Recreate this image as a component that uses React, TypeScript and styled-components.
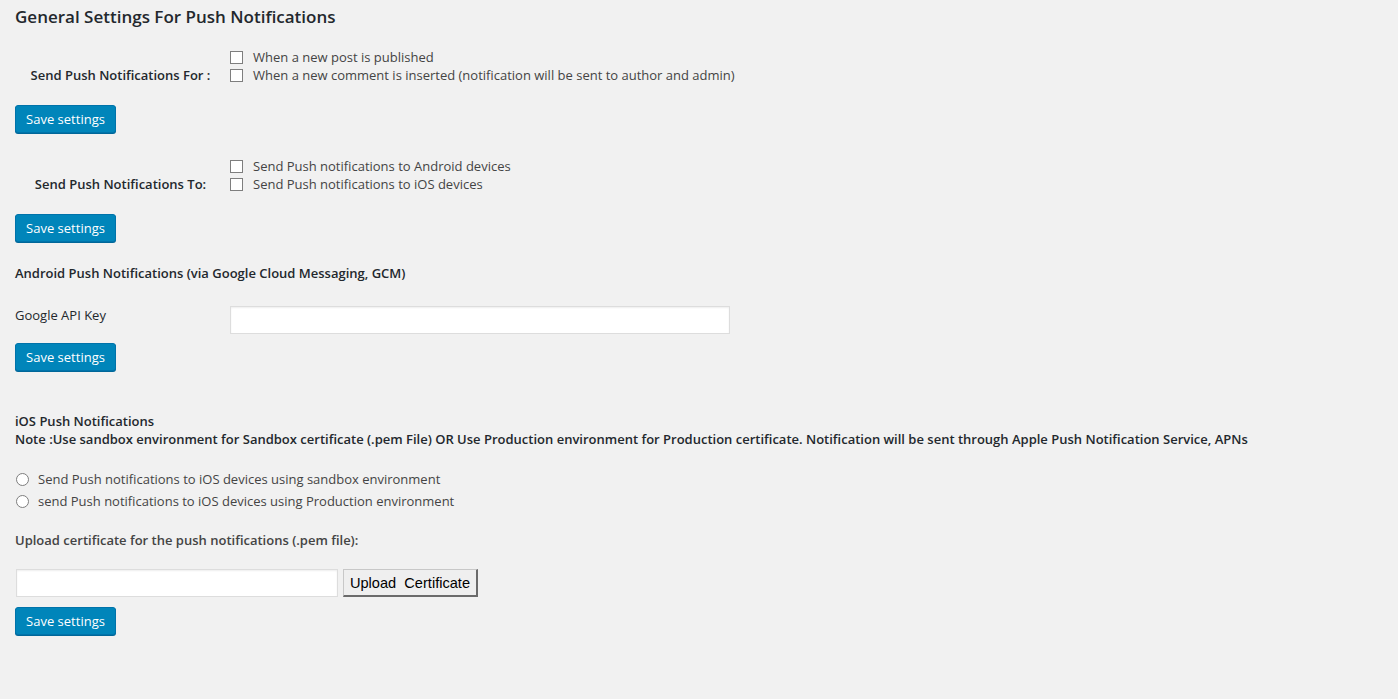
import React from "react";
import styled, { createGlobalStyle } from "styled-components";

const Global = createGlobalStyle`
  html, body { margin: 0; padding: 0; background: #f1f1f1; }
  body { font-family: "Open Sans", "Noto Sans", sans-serif; font-size: 13px; color: #444; }
  * { box-sizing: border-box; }
`;

const Page = styled.div`
  padding: 6px 15px 40px 15px;
  width: 1398px;
  min-height: 699px;
`;

const Title = styled.h2`
  margin: 0;
  font-size: 17px;
  font-weight: 600;
  color: #23282d;
  line-height: 22px;
`;

const FieldRow = styled.div<{ $top: number }>`
  display: grid;
  grid-template-columns: 211px 1fr;
  column-gap: 4px;
  align-items: center;
  margin-top: ${(p) => p.$top}px;
`;

const CenterLabel = styled.div`
  text-align: center;
  font-weight: 600;
  color: #23282d;
  padding-top: 17px;
`;

const Options = styled.div`
  display: flex;
  flex-direction: column;
`;

const Option = styled.label`
  display: flex;
  align-items: center;
  height: 18px;
  line-height: 18px;
  color: #444;
`;

const Check = styled.span`
  width: 13px;
  height: 13px;
  border: 1px solid #7e7e7e;
  background: #fff;
  margin-right: 10px;
  flex: none;
`;

const Radio = styled.span`
  width: 13px;
  height: 13px;
  border: 1px solid #7e7e7e;
  border-radius: 50%;
  background: #fff;
  margin-left: 1px;
  margin-right: 9px;
  flex: none;
`;

const SaveButton = styled.button<{ $top: number }>`
  display: block;
  margin-top: ${(p) => p.$top}px;
  height: 28px;
  width: 101px;
  padding: 0;
  background: #0085ba;
  border: 1px solid #0073aa;
  border-radius: 3px;
  box-shadow: 0 1px 0 #006799;
  color: #fff;
  font-family: "Open Sans", sans-serif;
  font-size: 13px;
  line-height: 26px;
  text-align: center;
`;

const SubHeading = styled.div<{ $top: number }>`
  margin-top: ${(p) => p.$top}px;
  font-weight: 600;
  color: #23282d;
  line-height: 18px;
`;

const KeyRow = styled.div`
  display: grid;
  grid-template-columns: 215px 500px;
  align-items: center;
  margin-top: 24px;
`;

const KeyLabel = styled.div`
  color: #23282d;
  padding-bottom: 10px;
`;

const TextInput = styled.div<{ $w: number }>`
  width: ${(p) => p.$w}px;
  height: 28px;
  background: #fff;
  border: 1px solid #ddd;
  box-shadow: inset 0 1px 2px rgba(0, 0, 0, 0.07);
`;

const NoteBlock = styled.div`
  margin-top: 41px;
  font-weight: 600;
  color: #23282d;
  line-height: 18px;
`;

const RadioGroup = styled.div`
  margin-top: 22px;
  display: flex;
  flex-direction: column;
  gap: 4px;
`;

const UploadLabel = styled.div`
  margin-top: 21px;
  font-weight: 600;
  color: #444;
  line-height: 18px;
`;

const UploadRow = styled.div`
  display: flex;
  align-items: center;
  gap: 5px;
  margin-top: 20px;
  padding-left: 1px;
`;

const UploadButton = styled.button`
  height: 28px;
  width: 135px;
  padding: 0;
  background: #efefef;
  border-style: solid;
  border-color: #c8c8c8 #6b6b6b #6b6b6b #c8c8c8;
  border-width: 1px 2px 2px 1px;
  font-family: "Liberation Sans", Arial, sans-serif;
  font-size: 14.6px;
  color: #000;
  white-space: pre;
`;

export default function App() {
  return (
    <Page>
      <Global />
      <Title>General Settings For Push Notifications</Title>

      <FieldRow $top={20}>
        <CenterLabel>Send Push Notifications For :</CenterLabel>
        <Options>
          <Option><Check />When a new post is published</Option>
          <Option><Check />When a new comment is inserted (notification will be sent to author and admin)</Option>
        </Options>
      </FieldRow>
      <SaveButton $top={21}>Save settings</SaveButton>

      <FieldRow $top={24}>
        <CenterLabel>Send Push Notifications To:</CenterLabel>
        <Options>
          <Option><Check />Send Push notifications to Android devices</Option>
          <Option><Check />Send Push notifications to iOS devices</Option>
        </Options>
      </FieldRow>
      <SaveButton $top={21}>Save settings</SaveButton>

      <SubHeading $top={22}>Android Push Notifications (via Google Cloud Messaging, GCM)</SubHeading>

      <KeyRow>
        <KeyLabel>Google API Key</KeyLabel>
        <TextInput $w={500} />
      </KeyRow>
      <SaveButton $top={9}>Save settings</SaveButton>

      <NoteBlock>
        iOS Push Notifications
        <br />
        Note :Use sandbox environment for Sandbox certificate (.pem File) OR Use Production environment for Production certificate. Notification will be sent through Apple Push Notification Service, APNs
      </NoteBlock>

      <RadioGroup>
        <Option><Radio />Send Push notifications to iOS devices using sandbox environment</Option>
        <Option><Radio />send Push notifications to iOS devices using Production environment</Option>
      </RadioGroup>

      <UploadLabel>Upload certificate for the push notifications (.pem file):</UploadLabel>

      <UploadRow>
        <TextInput $w={322} />
        <UploadButton>{"Upload  Certificate"}</UploadButton>
      </UploadRow>
      <SaveButton $top={10}>Save settings</SaveButton>
    </Page>
  );
}
